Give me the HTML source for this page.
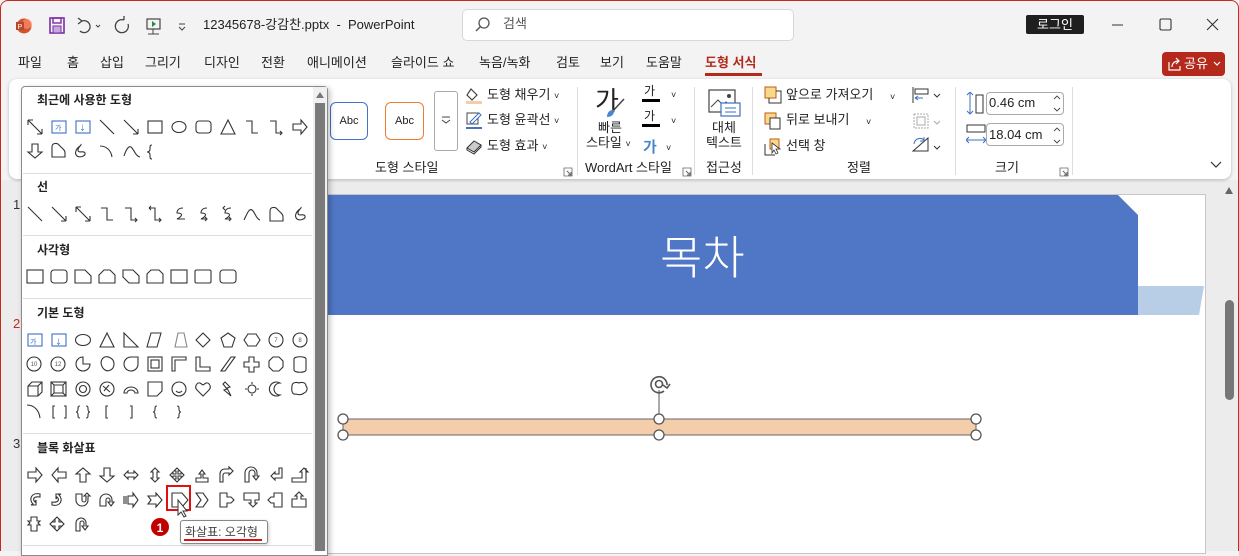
<!DOCTYPE html>
<html><head><meta charset="utf-8">
<style>
*{margin:0;padding:0;box-sizing:border-box}
body{width:1239px;height:551px;overflow:hidden;background:#f3f3f3;font-family:"Liberation Sans","Noto Sans CJK KR",sans-serif;color:#222;position:relative;font-size:13px}
.a{position:absolute;white-space:nowrap}
.t{font-size:13px;line-height:16px}
.s{font-size:12px;line-height:14px}
.sep{position:absolute;width:1px;background:#ddd}
</style></head><body>
<!-- window border -->
<div class="a" style="left:0;top:0;width:1239px;height:551px;border:1px solid #c42b1c;border-bottom:none;border-radius:8px 8px 0 0"></div>

<!-- title bar -->
<svg class="a" style="left:14px;top:15px" width="200" height="22" viewBox="0 0 200 22">
<circle cx="10" cy="11" r="7.5" fill="#d35230"/><circle cx="13" cy="9" r="5" fill="#ff8f6b" opacity=".7"/><rect x="2" y="7" width="8" height="8" fill="#b7472a"/><text x="3.5" y="14" font-size="7" fill="#fff" font-family="Liberation Sans">P</text>
<rect x="36" y="3" width="14" height="15" fill="none" stroke="#7b2fa8" stroke-width="1.6"/><rect x="39" y="3" width="8" height="5" fill="none" stroke="#7b2fa8" stroke-width="1.4"/><rect x="39" y="11" width="8" height="7" fill="#c9a6e0" stroke="#7b2fa8"/>
<path d="M68 6 A6 6 0 1 1 66 16 M68 6 L64 3 M68 6 L64 9" fill="none" stroke="#444" stroke-width="1.3"/>
<path d="M82 10l2 2 2-2" fill="none" stroke="#444"/>
<path d="M110 5 A6.5 6.5 0 1 0 114 9 M110 5 L110 1" fill="none" stroke="#444" stroke-width="1.3"/>
<rect x="133" y="4" width="13" height="10" fill="none" stroke="#444" stroke-width="1.2"/><path d="M139 14v5 M134 19h11" stroke="#444"/><path d="M138 6l4 3-4 3z" fill="#2a8a3a"/>
<path d="M165 9h6 M165 12l3 3 3-3" fill="none" stroke="#444"/>
</svg>
<div class="a t" style="left:203px;top:17px">12345678-강감찬.pptx&nbsp; - &nbsp;PowerPoint</div>
<div class="a" style="left:462px;top:9px;width:332px;height:32px;background:#fff;border:1px solid #d8d8d8;border-radius:5px"></div>
<svg class="a" style="left:474px;top:16px" width="18" height="18"><circle cx="10" cy="7" r="5" fill="none" stroke="#555" stroke-width="1.3"/><path d="M6.5 10.5L2 15" stroke="#555" stroke-width="1.4"/></svg>
<div class="a t" style="left:503px;top:16px;color:#555">검색</div>
<div class="a t" style="left:1026px;top:15px;width:58px;height:19px;background:#1f1f1f;color:#fff;text-align:center;line-height:19px;border-radius:2px">로그인</div>
<svg class="a" style="left:1105px;top:15px" width="120" height="20"><path d="M7 10h11" stroke="#333"/><rect x="55" y="4" width="11" height="11" rx="1.5" fill="none" stroke="#333" stroke-width="1.1"/><path d="M102 4l11 11M113 4l-11 11" stroke="#333" stroke-width="1.1"/></svg>

<!-- menu -->
<div class="a t" style="left:18px;top:55px">파일</div>
<div class="a t" style="left:67px;top:55px">홈</div>
<div class="a t" style="left:100px;top:55px">삽입</div>
<div class="a t" style="left:145px;top:55px">그리기</div>
<div class="a t" style="left:204px;top:55px">디자인</div>
<div class="a t" style="left:261px;top:55px">전환</div>
<div class="a t" style="left:307px;top:55px">애니메이션</div>
<div class="a t" style="left:391px;top:55px">슬라이드 쇼</div>
<div class="a t" style="left:479px;top:55px">녹음/녹화</div>
<div class="a t" style="left:556px;top:55px">검토</div>
<div class="a t" style="left:600px;top:55px">보기</div>
<div class="a t" style="left:646px;top:55px">도움말</div>
<div class="a t" style="left:705px;top:55px;color:#b5291c;font-weight:bold">도형 서식</div>
<div class="a" style="left:705px;top:73px;width:57px;height:3px;background:#b5291c"></div>
<div class="a" style="left:1162px;top:52px;width:63px;height:24px;background:#b5291c;border-radius:4px"></div>
<svg class="a" style="left:1167px;top:56px" width="16" height="16"><path d="M2 6v8h11v-4" fill="none" stroke="#fff" stroke-width="1.2"/><path d="M5 11c0-4 3-6 7-6M9 2l3 3-3 3" fill="none" stroke="#fff" stroke-width="1.2"/></svg>
<div class="a t" style="left:1184px;top:56px;color:#fff">공유</div>
<svg class="a" style="left:1213px;top:61px" width="8" height="6"><path d="M1 1l3 3 3-3" fill="none" stroke="#fff" stroke-width="1.2"/></svg>

<!-- workspace -->
<div class="a" style="left:1px;top:180px;width:1237px;height:371px;background:#ececec"></div>
<!-- ribbon -->
<div class="a" style="left:9px;top:79px;width:1222px;height:100px;background:#fff;border-radius:8px;box-shadow:0 1px 3px rgba(0,0,0,.25)"></div>

<!-- slide -->
<div class="a" style="left:327px;top:194px;width:879px;height:360px;background:#fff;border:1px solid #c6c6c6"></div>
<svg class="a" style="left:0;top:0" width="1239" height="551">
<polygon points="328,195 1118,195 1138,215 1138,315 328,315" fill="#5077c5"/>
<polygon points="1138,286 1204,286 1199,315 1138,315" fill="#b8cde6"/>
<line x1="659" y1="390" x2="659" y2="418" stroke="#555"/>
<rect x="343" y="419" width="633" height="16" fill="#f4cdaa" stroke="#666"/>
<g fill="#fff" stroke="#555" stroke-width="1.3">
<circle cx="343" cy="419" r="5"/><circle cx="659" cy="419" r="5"/><circle cx="976" cy="419" r="5"/>
<circle cx="343" cy="435" r="5"/><circle cx="659" cy="435" r="5"/><circle cx="976" cy="435" r="5"/></g>
<g fill="none" stroke="#555" stroke-width="1.6"><path d="M667 385 A8 8 0 1 0 664 391"/><circle cx="659" cy="384" r="3.5"/><path d="M663 385l4 3 3-4"/></g>
<path d="M1225 194l4-7 4 7z" fill="#666"/>
<rect x="1225" y="300" width="9" height="100" rx="4.5" fill="#777"/>
</svg>
<div class="a" style="left:660px;top:225px;font-size:46px;line-height:60px;color:#fff;font-family:'Noto Sans CJK KR',sans-serif;font-weight:300">목차</div>
<div class="a t" style="left:13px;top:197px;color:#333">1</div>
<div class="a t" style="left:13px;top:316px;color:#c42b1c">2</div>
<div class="a t" style="left:13px;top:436px;color:#333">3</div>

<!-- ribbon right content -->
<div class="a s" style="left:330px;top:102px;width:38px;height:38px;border:1px solid #4472c4;border-radius:6px;text-align:center;line-height:36px;font-size:11px">Abc</div>
<div class="a s" style="left:385px;top:102px;width:39px;height:38px;border:1px solid #ed7d31;border-radius:6px;text-align:center;line-height:36px;font-size:11px">Abc</div>
<div class="a" style="left:434px;top:91px;width:24px;height:60px;border:1px solid #aaa;border-radius:3px"></div>
<svg class="a" style="left:440px;top:115px" width="12" height="10"><path d="M2 2h8M2 5l4 3 4-3" fill="none" stroke="#444"/></svg>
<svg class="a" style="left:464px;top:86px" width="22" height="72">
<path d="M7 3l6 6-5 5-5-5z" fill="none" stroke="#444" stroke-width="1.2"/><rect x="2" y="15" width="16" height="3" fill="#f4cdaa"/>
<rect x="3" y="27" width="11" height="11" fill="none" stroke="#444"/><path d="M6 36l9-9 2 2-9 9z" fill="#fff" stroke="#3b6fc4"/><rect x="2" y="41" width="16" height="2" fill="#4472c4"/>
<path d="M3 62l7-7 7 4-7 7z" fill="#ccc" stroke="#333"/><path d="M3 62v2l7 4 7-7v-2" fill="none" stroke="#333"/>
</svg>
<div class="a t" style="left:487px;top:87px">도형 채우기 <span style="font-size:9px">˅</span></div>
<div class="a t" style="left:487px;top:112px">도형 윤곽선 <span style="font-size:9px">˅</span></div>
<div class="a t" style="left:487px;top:138px">도형 효과 <span style="font-size:9px">˅</span></div>
<div class="a t" style="left:375px;top:160px">도형 스타일</div>
<svg class="a" style="left:563px;top:167px" width="10" height="10"><path d="M1 1h8v8H1z" fill="none" stroke="#666" stroke-width=".8"/><path d="M4 4l4 4M8 5v3H5" fill="none" stroke="#666"/></svg>
<div class="sep" style="left:577px;top:87px;height:88px"></div>

<div class="a" style="left:595px;top:84px;font-size:26px;line-height:34px">가</div>
<svg class="a" style="left:604px;top:98px" width="22" height="22"><path d="M20 1L8 14" stroke="#444" stroke-width="1.5"/><path d="M9 12c-4 0-6 3-6 7 4 0 7-2 7-6z" fill="#4a86d0"/></svg>
<div class="a t" style="left:598px;top:120px">빠른</div>
<div class="a t" style="left:586px;top:135px">스타일 <span style="font-size:9px">˅</span></div>
<div class="a s" style="left:644px;top:84px;font-size:12px">가</div><div class="a" style="left:642px;top:99px;width:18px;height:3px;background:#000"></div>
<div class="a s" style="left:644px;top:109px;font-size:12px">가</div><div class="a" style="left:642px;top:124px;width:18px;height:3px;background:#000"></div>
<div class="a" style="left:643px;top:136px;font-size:15px;font-weight:bold;color:#4a86d0">가</div>
<div class="a s" style="left:671px;top:88px;font-size:9px">˅</div>
<div class="a s" style="left:671px;top:114px;font-size:9px">˅</div>
<div class="a s" style="left:666px;top:141px;font-size:9px">˅</div>
<div class="a t" style="left:585px;top:160px">WordArt 스타일</div>
<svg class="a" style="left:682px;top:167px" width="10" height="10"><path d="M1 1h8v8H1z" fill="none" stroke="#666" stroke-width=".8"/><path d="M4 4l4 4M8 5v3H5" fill="none" stroke="#666"/></svg>
<div class="sep" style="left:694px;top:87px;height:88px"></div>

<svg class="a" style="left:708px;top:89px" width="34" height="30"><rect x="1" y="1" width="26" height="22" fill="none" stroke="#444" stroke-width="1.2"/><path d="M3 18l7-7 5 5 3-3 6 6" fill="none" stroke="#444"/><circle cx="21" cy="7" r="2" fill="#444"/><rect x="13" y="14" width="19" height="13" fill="#fff" stroke="#3b6fc4" stroke-width="1.2"/><path d="M17 19h11M17 23h11" stroke="#3b6fc4"/></svg>
<div class="a t" style="left:712px;top:120px">대체</div>
<div class="a t" style="left:706px;top:135px">텍스트</div>
<div class="a t" style="left:706px;top:160px">접근성</div>
<div class="sep" style="left:752px;top:87px;height:88px"></div>

<svg class="a" style="left:764px;top:86px" width="20" height="70">
<rect x="1" y="1" width="11" height="11" fill="#f7d98b" stroke="#c55a11"/><path d="M12 5h5v12H5v-5" fill="none" stroke="#333"/>
<rect x="1" y="27" width="11" height="11" fill="#f7d98b" stroke="#c55a11"/><rect x="6" y="32" width="10" height="11" fill="#fff" stroke="#333"/>
<rect x="6" y="53" width="9" height="10" fill="#f7d98b" stroke="#c55a11"/><path d="M1 58v11h10" fill="none" stroke="#333"/><path d="M8 57l8 6h-4l2 4-2 1-2-4-2 3z" fill="#fff" stroke="#333" stroke-width=".8"/>
</svg>
<div class="a t" style="left:786px;top:87px">앞으로 가져오기</div>
<div class="a s" style="left:890px;top:90px;font-size:9px">˅</div>
<div class="a t" style="left:786px;top:112px">뒤로 보내기</div>
<div class="a s" style="left:866px;top:115px;font-size:9px">˅</div>
<div class="a t" style="left:786px;top:138px">선택 창</div>
<svg class="a" style="left:911px;top:86px" width="32" height="70">
<path d="M2 1v16" stroke="#333"/><rect x="4" y="3" width="13" height="5" fill="none" stroke="#333"/><path d="M4 12h8M4 12l3-2M4 12l3 2" stroke="#3b6fc4" fill="none"/><path d="M23 8l3 3 3-3" fill="none" stroke="#333"/>
<rect x="3" y="28" width="14" height="14" fill="none" stroke="#aaa" stroke-dasharray="2 1"/><rect x="6" y="31" width="8" height="8" fill="none" stroke="#aaa"/><path d="M23 35l3 3 3-3" fill="none" stroke="#aaa"/>
<path d="M2 65h15V52z" fill="none" stroke="#333"/><path d="M3 58a6 6 0 0 1 10-4M13 51v4h-4" fill="none" stroke="#3b6fc4"/><path d="M23 60l3 3 3-3" fill="none" stroke="#333"/>
</svg>
<div class="a t" style="left:847px;top:160px">정렬</div>
<div class="sep" style="left:955px;top:87px;height:88px"></div>

<svg class="a" style="left:966px;top:92px" width="20" height="54"><path d="M4 1v20M1 3l3-3 3 3M1 19l3 3 3-3" fill="none" stroke="#3b6fc4"/><rect x="10" y="3" width="7" height="18" fill="none" stroke="#333"/><rect x="1" y="33" width="18" height="7" fill="none" stroke="#333"/><path d="M1 48h18M3 45l-3 3 3 3M17 45l3 3-3 3" fill="none" stroke="#3b6fc4"/></svg>
<div class="a" style="left:986px;top:92px;width:78px;height:23px;border:1px solid #aaa;border-radius:4px"></div>
<div class="a t" style="left:989px;top:95px">0.46 cm</div>
<div class="a" style="left:986px;top:123px;width:78px;height:23px;border:1px solid #aaa;border-radius:4px"></div>
<div class="a t" style="left:989px;top:127px">18.04 cm</div>
<svg class="a" style="left:1052px;top:94px" width="10" height="52"><path d="M2 5l3-3 3 3M2 14l3 3 3-3M2 37l3-3 3 3M2 46l3 3 3-3" fill="none" stroke="#444" stroke-width=".9"/></svg>
<div class="a t" style="left:995px;top:160px">크기</div>
<svg class="a" style="left:1059px;top:167px" width="10" height="10"><path d="M1 1h8v8H1z" fill="none" stroke="#666" stroke-width=".8"/><path d="M4 4l4 4M8 5v3H5" fill="none" stroke="#666"/></svg>
<div class="sep" style="left:1072px;top:87px;height:88px"></div>
<svg class="a" style="left:1210px;top:161px" width="12" height="8"><path d="M1 1l5 5 5-5" fill="none" stroke="#333" stroke-width="1.2"/></svg>

<!-- dropdown panel -->
<div class="a" style="left:21px;top:86px;width:307px;height:470px;background:#fff;border:1px solid #8a8a8a;border-radius:4px 4px 0 0;box-shadow:2px 2px 6px rgba(0,0,0,.25)"></div>
<div class="a" style="left:313px;top:87px;width:14px;height:464px;background:#f0f0f0"></div>
<svg class="a" style="left:314px;top:90px" width="12" height="10"><path d="M2 8l4-6 4 6z" fill="#777"/></svg>
<div class="a" style="left:315px;top:103px;width:10px;height:448px;background:#7a7a7a"></div>

<div class="a s" style="left:37px;top:93px;font-weight:bold">최근에 사용한 도형</div>
<div class="a s" style="left:37px;top:180px;font-weight:bold">선</div>
<div class="a s" style="left:37px;top:243px;font-weight:bold">사각형</div>
<div class="a s" style="left:37px;top:306px;font-weight:bold">기본 도형</div>
<div class="a s" style="left:37px;top:441px;font-weight:bold">블록 화살표</div>
<div class="a" style="left:23px;top:173px;width:289px;height:1px;background:#ddd"></div>
<div class="a" style="left:23px;top:235px;width:289px;height:1px;background:#ddd"></div>
<div class="a" style="left:23px;top:298px;width:289px;height:1px;background:#ddd"></div>
<div class="a" style="left:23px;top:433px;width:289px;height:1px;background:#ddd"></div>
<div class="a" style="left:23px;top:545px;width:289px;height:1px;background:#ddd"></div>

<svg class="a" style="left:0;top:0" width="330" height="551">
<defs>
<path id="ra" d="M1 5h8V1l6 7-6 7v-4H1z"/>
<path id="ln" d="M1 1L15 15"/>
<path id="la" d="M1 1L15 15M15 15V10M15 15H10"/>
<path id="dl" d="M1 1L15 15M1 1v5M1 1h5M15 15v-5M15 15h-5"/>
<path id="el" d="M2 2h6v12h6"/>
<path id="ea" d="M2 2h6v12h6M12 12l2 2-2 2"/>
</defs>
<g fill="none" stroke="#333" stroke-width="1.1">
<!-- recent row1 y119 -->
<g transform="translate(27,119)"><use href="#dl"/></g>
<g transform="translate(51,119)" stroke="#3b6fc4"><rect x="1" y="2" width="14" height="12"/></g>
<g transform="translate(75,119)" stroke="#3b6fc4"><rect x="1" y="2" width="14" height="12"/></g>
<g transform="translate(99,119)"><use href="#ln"/></g>
<g transform="translate(123,119)"><use href="#la"/></g>
<rect x="148" y="121" width="14" height="12"/>
<ellipse cx="179" cy="127" rx="7" ry="5.5"/>
<rect x="196" y="121" width="15" height="12" rx="3"/>
<path d="M228 120l7 14h-14z"/>
<g transform="translate(244,119)"><use href="#el"/></g>
<g transform="translate(268,119)"><use href="#ea"/></g>
<g transform="translate(292,119)"><use href="#ra"/></g>
<!-- recent row2 y143 -->
<g transform="translate(27,143) rotate(90 8 8)"><use href="#ra"/></g>
<path d="M52 157v-10c0-4 4-4 6-3l3 3c2 2 4 3 4 6v4z"/>
<path d="M80 146c-4 3-6 7-3 10 3 2 9 0 8-3-1-3-7 1-7-3 0-3 4-5 3-6"/>
<path d="M100 146c6 0 11 4 12 11"/>
<path d="M124 156c2-6 5-12 8-8s4 8 8 9"/>
<path d="M152 145c-2 0-2 1-2 4 0 2-1 3-3 3 2 0 3 1 3 3 0 3 0 4 2 4"/>
<!-- line row y205 -->
<g transform="translate(27,206)"><use href="#ln"/></g>
<g transform="translate(51,206)"><use href="#la"/></g>
<g transform="translate(75,206)"><use href="#dl"/></g>
<g transform="translate(99,206)"><use href="#el"/></g>
<g transform="translate(123,206)"><use href="#ea"/></g>
<g transform="translate(147,206)"><use href="#ea"/><path d="M2 2l2-2M2 2l2 2"/></g>
<path d="M183 208c-5 0-6 3-6 5 6 0 6 3 0 6h8"/>
<path d="M207 208c-5 0-6 3-6 5 6 0 6 3 0 6h6M205 217l2 2-2 2"/>
<path d="M231 208c-5 0-6 3-6 5 6 0 6 3 0 6h6M229 217l2 2-2 2M225 206l-2 2 2 2"/>
<path d="M244 220c3-6 5-12 8-10s4 9 8 10"/>
<path d="M270 221v-10c0-4 4-4 6-3l3 3c2 2 4 3 4 6v4z"/>
<path d="M300 209c-4 3-6 7-3 10 3 2 9 0 8-3-1-3-7 1-7-3 0-3 4-5 3-6"/>
<!-- rect row y270 -->
<rect x="27" y="270" width="16" height="13"/>
<rect x="51" y="270" width="16" height="13" rx="3"/>
<path d="M75 270h10l6 6v7H75z"/>
<path d="M99 283v-8l5-5h6l5 5v8z"/>
<path d="M123 270h10l6 6v7h-10l-6-6z"/>
<path d="M147 283v-9l4-4h8l4 4v9z"/>
<rect x="171" y="270" width="16" height="13"/>
<rect x="195" y="270" width="16" height="13" rx="1.5"/>
<rect x="220" y="270" width="16" height="13" rx="3"/>
<!-- basic row1 y333 -->
<rect x="28" y="334" width="14" height="12" stroke="#3b6fc4"/>
<rect x="52" y="334" width="14" height="12" stroke="#3b6fc4"/>
<ellipse cx="83" cy="340" rx="7.5" ry="5.5"/>
<path d="M107 333l7 14h-14z"/>
<path d="M124 333v14h14z"/>
<path d="M151 333h10l-4 14h-10z"/>
<path d="M178 333h6l3 14h-12z" stroke="#888"/>
<path d="M203 333l7 7-7 7-7-7z"/>
<path d="M228 333l7 5-3 9h-8l-3-9z"/>
<path d="M248 334h8l4 6-4 6h-8l-4-6z"/>
<circle cx="276" cy="340" r="7"/><circle cx="300" cy="340" r="7"/>
<!-- basic row2 y357 -->
<circle cx="34" cy="364" r="7"/><circle cx="58" cy="364" r="7"/>
<path d="M83 357a7 7 0 1 0 7 7h-7z"/>
<path d="M103 358c4-3 11 0 11 6s-6 8-9 6-6-8-2-12z"/>
<path d="M131 357h7v7a7 7 0 0 1-14 0 7 7 0 0 1 7-7z"/>
<rect x="148" y="357" width="14" height="14"/><rect x="151" y="360" width="8" height="8"/>
<path d="M172 371v-14h14v3h-11v11z"/>
<path d="M196 357h4v10h10v4h-14z"/>
<path d="M221 371l10-14h4l-10 14z"/>
<path d="M249 357h5v5h5v5h-5v5h-5v-5h-5v-5h5z"/>
<path d="M273 357h6l4 4v6l-4 4h-6l-4-4v-6z"/>
<path d="M294 359c0-3 12-3 12 0v11c0 3-12 3-12 0z"/>
<!-- basic row3 y382 -->
<path d="M28 386l4-4h10v10l-4 4H28zM28 386h10v10M38 386l4-4"/>
<rect x="51" y="382" width="15" height="14"/><path d="M51 382l3 3h9l3-3M54 385v8h9v-8M51 396l3-3M66 396l-3-3"/>
<circle cx="83" cy="389" r="7"/><circle cx="83" cy="389" r="3.5"/>
<circle cx="107" cy="389" r="7"/><path d="M103 386l7 6M104 391l5-6"/>
<path d="M124 393a7 6 0 0 1 14 0h-3a4 3 0 0 0-8 0z"/>
<path d="M148 382h14v9l-5 5h-9z"/>
<circle cx="155" cy="389" r="0"/><circle cx="179" cy="389" r="7"/><path d="M176 391c2 2 4 2 6 0"/>
<path d="M203 396l-6-6c-3-3 0-8 3-7l3 2 3-2c3-1 6 4 3 7z"/>
<path d="M225 382l5 5-3 1 4 8-7-6 3-1-4-5z"/>
<circle cx="252" cy="389" r="4"/><path d="M252 382v2M252 394v2M245 389h2M257 389h2"/>
<path d="M280 383a7 7 0 1 0 0 12 6 6 0 0 1 0-12z"/>
<path d="M292 386c0-4 5-4 7-3 2-1 7-1 7 3 2 2 1 6-2 7-2 2-6 2-8 1-3 1-5-2-4-8z"/>
<!-- basic row4 y405 -->
<path d="M27 405c7 0 12 5 13 13"/>
<path d="M55 406h-2v12h2M64 406h2v12h-2"/>
<path d="M80 406c-2 0-2 1-2 3 0 2-1 3-2 3 1 0 2 1 2 3 0 2 0 3 2 3M86 406c2 0 2 1 2 3 0 2 1 3 2 3-1 0-2 1-2 3 0 2 0 3-2 3"/>
<path d="M108 406h-2v12h2"/>
<path d="M130 406h2v12h-2"/>
<path d="M157 406c-2 0-2 1-2 3 0 2-1 3-2 3 1 0 2 1 2 3 0 2 0 3 2 3"/>
<path d="M177 406c2 0 2 1 2 3 0 2 1 3 2 3-1 0-2 1-2 3 0 2 0 3-2 3"/>
<!-- block row1 y468 -->
<g transform="translate(27,467)"><use href="#ra"/></g>
<g transform="translate(51,467) rotate(180 8 8)"><use href="#ra"/></g>
<g transform="translate(75,467) rotate(-90 8 8)"><use href="#ra"/></g>
<g transform="translate(99,467) rotate(90 8 8)"><use href="#ra"/></g>
<path d="M124 475l4-4v2h6v-2l4 4-4 4v-2h-6v2z"/>
<path d="M155 468l4 4h-2v6h2l-4 4-4-4h2v-6h-2z"/>
<path d="M177 468l3 3h-2v3h3v-2l3 3-3 3v-2h-3v3h2l-3 3-3-3h2v-3h-3v2l-3-3 3-3v2h3v-3h-2z"/>
<path d="M196 482v-4h5v-4h-2l3-4 3 4h-2v4h5v4z"/>
<path d="M220 482v-8c0-3 2-5 5-5h4v-2l4 4-4 4v-2h-4c-1 0-2 1-2 2v7z"/>
<path d="M245 482v-9a6 6 0 0 1 12 0v3h2l-3 4-3-4h2v-3a2 2 0 0 0-6 0v9z"/>
<path d="M282 468v10h-7v2l-4-4 4-4v2h4v-6z"/>
<path d="M306 468v14h-14v-4h10v-6h-2l4-4 4 4h-2"/>
<!-- block row2 y492 -->
<path d="M40 494c-8-2-12 5-7 10l-2 1h5v-5l-1 2c-3-3-1-6 5-5z"/>
<path d="M52 505c8 2 12-5 7-10l2-1h-5v5l1-2c3 3 1 6-5 5z"/>
<path d="M76 494v6a6 6 0 0 0 12 0v-4h2l-3-3-3 3h2v4a2 2 0 0 1-4 0v-6z"/>
<path d="M100 506v-6a6 6 0 0 1 12 0v2h2l-3 4-3-4h2v-2a2 2 0 0 0-4 0v6z"/>
<path d="M124 496v8M126 496v8M128 496h5v-3l5 7-5 7v-3h-5z"/>
<path d="M148 496h8v-3l6 7-6 7v-3h-8l3-4z"/>
<path d="M172 493h10l6 7-6 7h-10z"/>
<path d="M196 493h7l5 7-5 7h-7l5-7z"/>
<path d="M220 493h7v4h4l3 3-3 3h-4v4h-7z"/>
<path d="M244 493h15v7h-4v3h2l-4 4-4-4h2v-3h-7z"/>
<path d="M282 493v14h-8v-4h-3l-3-3 3-3h3v-4z"/>
<path d="M292 507v-8h5v-3h-2l4-4 4 4h-2v3h5v8z"/>
<!-- block row3 y517 -->
<path d="M31 517h6v4h3l-2 2 2 2h-3v6h-6v-6h-3l2-2-2-2h3z"/>
<path d="M57 517l3 3h-1v2h2v-1l3 3-3 3v-1h-2v2h1l-3 3-3-3h1v-2h-2v1l-3-3 3-3v1h2v-2h-1z"/>
<path d="M76 531v-8a5 5 0 0 1 10 0v3h2l-3 4-3-4h2v-3a2 2 0 0 0-4 0v8z"/>
</g>
<rect x="28" y="336" width="0" height="0"/>
<text x="30" y="344" font-size="7" fill="#3b6fc4" font-family="Noto Sans CJK KR">가</text>
<text x="55" y="344" font-size="7" fill="#3b6fc4" font-family="Noto Sans CJK KR">↓</text>
<text x="55" y="130" font-size="7" fill="#3b6fc4" font-family="Noto Sans CJK KR">가</text>
<text x="79" y="130" font-size="7" fill="#3b6fc4" font-family="Noto Sans CJK KR">↓</text>
<g fill="#555" font-size="6" font-family="Liberation Sans" text-anchor="middle"><text x="276" y="342">7</text><text x="300" y="342">8</text><text x="34" y="366">10</text><text x="58" y="366">12</text></g>
<!-- selection -->
<rect x="167" y="486" width="23" height="24" fill="none" stroke="#e01010" stroke-width="2"/>
<path d="M178 500v15l3-3 3 5 2-1-3-5h4z" fill="#fff" stroke="#333"/>
<circle cx="160" cy="527" r="9" fill="#c00000"/>
<text x="160" y="532" font-size="12" font-weight="bold" fill="#fff" text-anchor="middle" font-family="Liberation Sans">1</text>
</svg>
<div class="a" style="left:180px;top:520px;width:88px;height:24px;background:#fff;border:1px solid #888;border-radius:3px;box-shadow:1px 1px 3px rgba(0,0,0,.2)"></div>
<div class="a s" style="left:185px;top:525px;color:#444">화살표: 오각형</div>
<div class="a" style="left:184px;top:539px;width:78px;height:2px;background:#e01010"></div>
</body></html>
